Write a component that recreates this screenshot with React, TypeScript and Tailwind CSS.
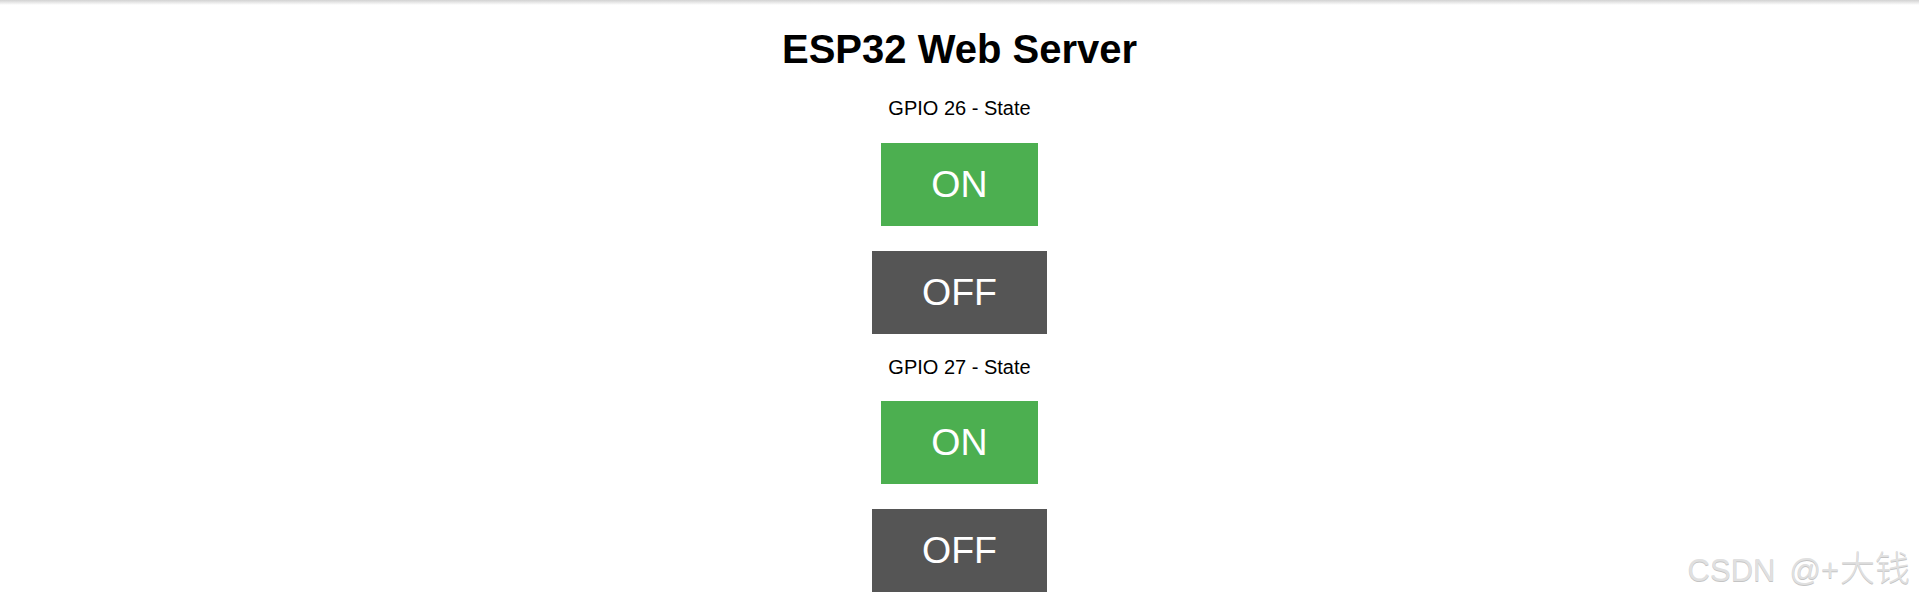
export default function App() {
  const gpios = ["26", "27"];

  return (
    <div className="relative h-[602px] w-full overflow-hidden bg-white font-['Liberation_Sans',Arial,sans-serif] text-black">
      {/* browser chrome shadow */}
      <div className="absolute inset-x-0 top-0 h-[5px] bg-gradient-to-b from-[#d2d2d2] to-white" />

      <div className="flex flex-col items-center text-center">
        <h1 className="mt-[26px] text-[40px] font-bold leading-[46px]">
          ESP32 Web Server
        </h1>

        {gpios.map((pin, i) => (
          <div key={pin} className={`flex flex-col items-center ${i === 0 ? "mt-[25px]" : "mt-[22px]"}`}>
            <p className="text-[20px] leading-[23px]">GPIO {pin} - State</p>
            <button
              type="button"
              className="mt-[22.5px] cursor-pointer bg-[#4caf50] px-[50px] py-[20px] text-[37.5px] leading-[43px] text-white"
            >
              ON
            </button>
            <button
              type="button"
              className="mt-[25px] cursor-pointer bg-[#555555] px-[50px] py-[20px] text-[37.5px] leading-[43px] text-white"
            >
              OFF
            </button>
          </div>
        ))}
      </div>

      {/* watermark */}
      <div className="absolute right-[9px] top-[548px] flex items-baseline font-['Liberation_Sans','Noto_Sans_CJK_SC',sans-serif] text-[31px] leading-[36px] text-[#e0e0e0] [text-shadow:0_1px_0_#c4c4c4]">
        <span>CSDN</span>
        <span className="ml-[14px]">@+</span>
        <span className="ml-[1px] font-['Noto_Sans_CJK_SC',sans-serif] text-[35px] font-light leading-[36px]">大钱</span>
      </div>
    </div>
  );
}
